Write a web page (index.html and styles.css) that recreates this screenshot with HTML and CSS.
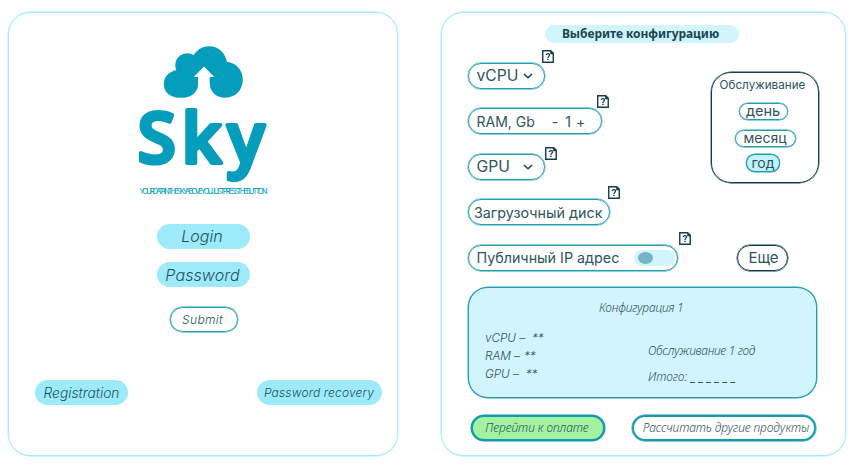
FILE: index.html
```html
<!DOCTYPE html>
<html lang="ru">
<head>
<meta charset="utf-8">
<title>Sky</title>
<link rel="stylesheet" href="styles.css">
</head>
<body>
<svg class="defs" width="0" height="0" aria-hidden="true">
  <symbol id="help" viewBox="0 0 12 13">
    <path d="M.75.75H8.6L11.25 3.4V12.25H.75Z" fill="#fff" stroke="#123f4b" stroke-width="1.4"/>
    <path d="M8.2.4H9L11.9 3.2V4.2H8.2Z" fill="#123f4b"/>
    <path d="M4.3 5.1C4.3 3.2 7.5 3.3 7.5 5.1C7.5 6.4 5.9 6.4 5.9 8" fill="none" stroke="#123f4b" stroke-width="1.3"/>
    <path d="M5.2 8.8h1.5v1.3H5.2z" fill="#123f4b"/>
  </symbol>
  <symbol id="chevron" viewBox="0 0 10 6">
    <path d="M1 1L5 4.8L9 1" fill="none" stroke="#123f4b" stroke-width="1.5"/>
  </symbol>
</svg>
<main class="page">
  <section class="panel login">
    <svg class="logo" viewBox="134.500 40 140 160">
      <g fill="#049dbc">
        <circle cx="209.6" cy="64" r="17.8"/>
        <circle cx="187.8" cy="65.2" r="12"/>
        <path d="M181 69.800H198.600V84C198.600 92 192 97.700 183 97.700H180C170 97.700 164.300 91.500 164.300 84C164.300 76 171 69.800 181 69.800Z"/>
        <path d="M225.500 61.800C236 61.800 243.300 70 243.300 79.800C243.300 90 236 97.700 225.500 97.700C216 97.700 210.200 91 210.200 83V66Z"/>
        <path d="M180 64H222V84H180Z"/>
      </g>
      <path d="M204.6 66.5L214.8 77H210.200V86H198.600V77H194.300Z" fill="#fff"/>
      <text class="brand" y="163"><tspan x="138">S</tspan><tspan x="182">k</tspan><tspan x="227.800">y</tspan></text>
      <text class="tagline" x="140" y="193.700" textLength="128">YOURDATAINTHESKYABOVEYOUJUSTPRESSTHEBUTTON</text>
    </svg>
    <div class="field"><span class="t-login">Login</span></div>
    <div class="field"><span class="t-pass">Password</span></div>
    <div class="submit"><span class="t-submit">Submit</span></div>
    <div class="links">
      <div class="link reg"><span class="t-reg">Registration</span></div>
      <div class="link rec"><span class="t-rec">Password recovery</span></div>
    </div>
  </section>
  <section class="panel config">
    <h1 class="title"><span class="t-title">Выберите конфигурацию</span></h1>
    <div class="top">
      <div class="options">
        <div class="pill cpu"><span class="t-cpu">vCPU</span><svg class="chev"><use href="#chevron"/></svg><svg class="help"><use href="#help"/></svg></div>
        <div class="pill ram"><span class="t-ram">RAM, Gb</span><span class="minus">-</span><span class="count">1</span><span class="plus">+</span><svg class="help"><use href="#help"/></svg></div>
        <div class="pill gpu"><span class="t-gpu">GPU</span><svg class="chev"><use href="#chevron"/></svg><svg class="help"><use href="#help"/></svg></div>
        <div class="pill disk"><span class="t-disk">Загрузочный диск</span><svg class="help"><use href="#help"/></svg></div>
        <div class="pill ip"><span class="t-ip">Публичный IP адрес</span><span class="toggle"><span class="knob"></span></span><svg class="help"><use href="#help"/></svg></div>
      </div>
      <div class="side">
        <div class="service">
          <span class="t-service">Обслуживание</span>
          <div class="term day"><span class="t-day">день</span></div>
          <div class="term month"><span class="t-month">месяц</span></div>
          <div class="term year"><span class="t-year">год</span></div>
        </div>
        <div class="more"><span class="t-more">Еще</span></div>
      </div>
    </div>
    <div class="summary">
      <div class="sum-title"><span class="t-sum">Конфигурация 1</span></div>
      <div class="sum-body">
        <div class="specs">
          <div><span class="t-s1">vCPU –</span><span class="stars s1">**</span></div>
          <div><span class="t-s2">RAM –</span><span class="stars s2">**</span></div>
          <div><span class="t-s3">GPU –</span><span class="stars s3">**</span></div>
        </div>
        <div class="totals">
          <div><span class="t-year1">Обслуживание 1 год</span></div>
          <div><span class="t-total">Итого:</span><span class="blank">______</span></div>
        </div>
      </div>
    </div>
    <div class="actions">
      <div class="action pay"><span class="t-pay">Перейти к оплате</span></div>
      <div class="action other"><span class="t-other">Рассчитать другие продукты</span></div>
    </div>
  </section>
</main>
</body>
</html>
```
FILE: styles.css
```css
* { box-sizing: border-box; }
body { margin: 0; background: #fff; color: #2d5560; font-family: Inter, "Liberation Sans", sans-serif; }
.defs { position: absolute; }
.page { display: flex; gap: 43px; padding: 12px 0 0 8px; width: 861px; height: 472px; overflow: hidden; }
.panel { height: 444px; border: 1.5px solid #a5ebf8; border-radius: 22px; display: flex; flex-direction: column; box-shadow: 0 0 0 .4px #a5ebf8; }
span { white-space: nowrap; }

/* Login panel */
.login { width: 390px; align-items: center; font-style: italic; font-weight: 350; font-feature-settings: "cv11"; color: #1d5361; }
.logo { width: 140px; height: 160px; margin: 27px 0 0 2px; flex: none; }
.brand { font: 600 70px "Open Sans", sans-serif; fill: #049dbc; stroke: #049dbc; stroke-width: 4; stroke-linejoin: round; }
.tagline { font: 400 7.5px Inter, sans-serif; fill: #049dbc; }
.field { width: 93px; height: 25px; border-radius: 13px; background: #9debfa; display: flex; align-items: center; justify-content: center; margin: 24px 0 0 1px; padding: 0 3px 2px 0; font-size: 16px; flex: none; }
.field + .field { margin-top: 13px; padding: 0 2px 0 0; }
.t-pass { letter-spacing: .1px; }
.submit { width: 68px; height: 25px; border: 1.5px solid #239eb3; border-radius: 13px; display: flex; align-items: center; justify-content: center; margin: 20px 0 0 1px; padding-right: 2px; font-size: 12px; letter-spacing: .35px; flex: none; box-shadow: 0 0 0 .4px #239eb3; }
.links { display: flex; justify-content: space-between; align-self: stretch; margin: 48px 15px 0 26px; }
.link { height: 25px; border-radius: 13px; background: #9debfa; display: flex; align-items: center; justify-content: center; }
.reg { width: 93px; font-size: 13.800px; }
.rec { width: 125px; font-size: 12px; letter-spacing: .15px; padding: 0 1px 1px 0; }

/* Configuration panel */
.config { width: 405px; padding: 11.500px 0 0 26px; }
.title { margin: 0 0 0 77px; width: 194px; height: 18px; border-radius: 9px; background: #d2f4fc; display: flex; align-items: center; justify-content: center; font: 700 12px "Noto Sans", sans-serif; letter-spacing: -.05px; padding-right: 3px; color: #174653; flex: none; }
.top { display: flex; justify-content: space-between; width: 351px; margin-top: 20px; height: 208px; flex: none; }
.options { display: flex; flex-direction: column; gap: 19.500px; }
.pill { position: relative; height: 26px; border: 1.5px solid #239eb3; border-radius: 13px; display: flex; align-items: center; padding-left: 7.500px; font-size: 15px; box-shadow: 0 0 0 .4px #239eb3; }
.cpu, .gpu { width: 77px; justify-content: space-between; padding-right: 11px; font-size: 15.700px; }
.ram { width: 134px; font-size: 14px; }
.disk { width: 142px; padding-left: 5px; font-size: 14.300px; }
.ip { width: 210px; font-size: 14.300px; }
.chev { width: 10px; height: 6px; }
.help { position: absolute; width: 12px; height: 13px; top: -14px; right: -10px; }
.ram .help { right: -8px; }
.gpu .help { top: -8px; right: -13px; }
.disk .help { top: -14px; right: -11px; }
.ip .help { right: -14px; top: -14px; }
.minus { margin-left: 17px; }
.count { margin-left: 7px; }
.plus { margin-left: 5px; }
.toggle { width: 41px; height: 16px; border-radius: 8px; background: #d2f4fc; margin-left: auto; margin-right: 2px; display: flex; align-items: center; padding-left: 4px; }
.knob { width: 15px; height: 12px; border-radius: 50%; background: #74b6c4; }
.side { width: 108px; margin-top: 9px; display: flex; flex-direction: column; align-items: center; }
.service { width: 108px; height: 111px; border: 1.5px solid #123f4b; border-radius: 20px; display: flex; flex-direction: column; align-items: center; padding-top: 4px; font-size: 11.700px; flex: none; box-shadow: 0 0 0 .4px #123f4b; }
.t-service { height: 16px; line-height: 16px; margin-left: -5px; }
.term { border: 1.5px solid #239eb3; border-radius: 9px; height: 17px; display: flex; align-items: center; justify-content: center; font-size: 14px; flex: none; line-height: 16px; box-shadow: 0 0 0 .4px #239eb3; }
.day { width: 49px; margin: 10px 0 0 -4px; font-size: 14.500px; }
.month { width: 61px; margin: 10px 0 0 0; }
.year { width: 34px; margin: 7.500px 0 0 -4px; height: 18px; background: #c3f2fb; }
.more { width: 51px; height: 26px; border: 1.5px solid #123f4b; border-radius: 13px; margin: 62px 0 0 -5px; padding-left: 2px; display: flex; align-items: center; justify-content: center; font-size: 15px; flex: none; box-shadow: 0 0 0 .4px #123f4b; }
.summary { width: 349px; height: 111px; margin-top: 16px; border: 1.5px solid #239eb3; border-radius: 20px; background: #d2f4fc; font: italic 350 12px "Noto Sans", sans-serif; flex: none; box-shadow: 0 0 0 .4px #239eb3; }
.sum-title { padding: 11px 0 0 130px; height: 28px; line-height: 17px; letter-spacing: -.2px; }
.sum-body { display: flex; padding-left: 16px; }
.specs { width: 163px; padding-top: 13px; font-family: Inter, sans-serif; font-size: 11.800px; font-feature-settings: "cv11"; line-height: 18px; letter-spacing: -.08px; }
.specs > div { display: flex; }
.stars { margin-left: 4px; }
.s1, .s3 { margin-left: 7px; }
.totals { padding-top: 22px; line-height: 26px; letter-spacing: -.35px; }
.totals > div { display: flex; height: 26px; }
.t-total { letter-spacing: -.1px; }
.blank { margin-left: 4px; letter-spacing: 3.300px; font-weight: 500; }
.actions { display: flex; gap: 27px; margin: 17px 0 0 3px; }
.action { height: 26px; border: 2.500px solid #1799b2; border-radius: 13px; display: flex; align-items: center; justify-content: center; font: italic 350 12px "Noto Sans", sans-serif; box-shadow: 0 0 0 .5px #1799b2; }
.pay { width: 134px; background: #a3f2a0; padding-right: 2px; letter-spacing: -.08px; }
.other { width: 184px; padding-left: 4px; letter-spacing: -.09px; }
```
